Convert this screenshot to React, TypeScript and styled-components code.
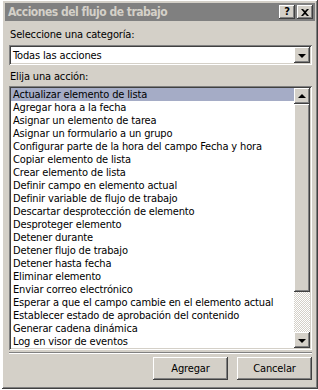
import React from "react";
import styled, { createGlobalStyle, css } from "styled-components";

const GlobalStyle = createGlobalStyle`
  body {
    margin: 0;
    background: #ffffff;
  }
`;

const actions = [
  "Actualizar elemento de lista",
  "Agregar hora a la fecha",
  "Asignar un elemento de tarea",
  "Asignar un formulario a un grupo",
  "Configurar parte de la hora del campo Fecha y hora",
  "Copiar elemento de lista",
  "Crear elemento de lista",
  "Definir campo en elemento actual",
  "Definir variable de flujo de trabajo",
  "Descartar desprotección de elemento",
  "Desproteger elemento",
  "Detener durante",
  "Detener flujo de trabajo",
  "Detener hasta fecha",
  "Eliminar elemento",
  "Enviar correo electrónico",
  "Esperar a que el campo cambie en el elemento actual",
  "Establecer estado de aprobación del contenido",
  "Generar cadena dinámica",
  "Log en visor de eventos",
];

const raised = css`
  background: #d4d0c8;
  box-shadow: inset -1px -1px #404040, inset 1px 1px #ffffff,
    inset -2px -2px #808080, inset 2px 2px #d4d0c8;
`;

const sunken = css`
  box-shadow: inset 1px 1px #808080, inset -1px -1px #ffffff,
    inset 2px 2px #404040, inset -2px -2px #d4d0c8;
`;

const App: React.FC = () => {
  return (
    <>
      <GlobalStyle />
      <Window>
        <TitleBar>
          <TitleText>Acciones del flujo de trabajo</TitleText>
          <CaptionButtons>
            <CaptionButton>?</CaptionButton>
            <CaptionButton $close>
              <svg width="8" height="7" viewBox="0 0 8 7">
                <path
                  d="M0 0h2l2 2 2-2h2L5 3.5 8 7H6L4 5 2 7H0l3-3.5z"
                  fill="#000"
                />
              </svg>
            </CaptionButton>
          </CaptionButtons>
        </TitleBar>
        <Body>
          <Label>Seleccione una categoría:</Label>
          <Combo>
            <ComboText>Todas las acciones</ComboText>
            <ArrowButton>
              <Arrow $down />
            </ArrowButton>
          </Combo>
          <Label $top={4}>Elija una acción:</Label>
          <ListBox>
            <Items>
              {actions.map((a, i) => (
                <Item key={a} $selected={i === 0}>
                  {a}
                </Item>
              ))}
            </Items>
            <ScrollBar>
              <ArrowButton>
                <Arrow />
              </ArrowButton>
              <Thumb />
              <Track />
              <ArrowButton>
                <Arrow $down />
              </ArrowButton>
            </ScrollBar>
          </ListBox>
          <Separator />
          <ButtonRow>
            <PushButton>Agregar</PushButton>
            <PushButton>Cancelar</PushButton>
          </ButtonRow>
        </Body>
      </Window>
    </>
  );
};

const Window = styled.div`
  ${raised};
  box-sizing: border-box;
  width: 316px;
  height: 389px;
  margin-left: 2px;
  padding: 3px;
  display: flex;
  flex-direction: column;
  font-family: "DejaVu Sans Condensed", "DejaVu Sans", sans-serif;
  font-size: 11px;
  letter-spacing: -0.15px;
  color: #000;
`;

const TitleBar = styled.div`
  height: 18px;
  background: #808080;
  display: flex;
  align-items: center;
  justify-content: space-between;
  padding: 0 2px 0 3px;
`;

const TitleText = styled.div`
  color: #d4d0c8;
  font-weight: bold;
  font-size: 12px;
  letter-spacing: -0.5px;
`;

const CaptionButtons = styled.div`
  display: flex;
  gap: 2px;
`;

const CaptionButton = styled.div<{ $close?: boolean }>`
  ${raised};
  width: 16px;
  height: 14px;
  display: flex;
  align-items: center;
  justify-content: center;
  font-weight: bold;
  font-size: 11px;
  line-height: 14px;
  padding-bottom: ${(p) => (p.$close ? 0 : 1)}px;
  box-sizing: border-box;
`;

const Body = styled.div`
  flex: 1;
  display: flex;
  flex-direction: column;
  padding: 6px 3px 0 4px;
`;

const Label = styled.div<{ $top?: number }>`
  margin-top: ${(p) => p.$top ?? 0}px;
  height: 15px;
  line-height: 15px;
  padding-left: 1px;
`;

const Combo = styled.div`
  ${sunken};
  background: #fff;
  height: 20px;
  margin-top: 3px;
  display: flex;
  align-items: center;
  padding: 2px;
  box-sizing: border-box;
`;

const ComboText = styled.div`
  flex: 1;
  padding-left: 2px;
`;

const ArrowButton = styled.div`
  ${raised};
  width: 16px;
  height: 16px;
  flex: none;
  display: flex;
  align-items: center;
  justify-content: center;
`;

const Arrow = styled.div<{ $down?: boolean }>`
  width: 0;
  height: 0;
  border-left: 4px solid transparent;
  border-right: 4px solid transparent;
  ${(p) =>
    p.$down
      ? css`
          border-top: 4px solid #000;
          margin-top: 1px;
        `
      : css`
          border-bottom: 4px solid #000;
          margin-bottom: 1px;
        `}
`;

const ListBox = styled.div`
  ${sunken};
  background: #fff;
  margin-top: 2px;
  height: 264px;
  padding: 2px;
  box-sizing: border-box;
  display: flex;
`;

const Items = styled.div`
  flex: 1;
  overflow: hidden;
`;

const Item = styled.div<{ $selected?: boolean }>`
  height: 13px;
  line-height: 13px;
  padding-left: 2px;
  white-space: nowrap;
  background: ${(p) => (p.$selected ? "#a5acc6" : "transparent")};
`;

const ScrollBar = styled.div`
  width: 16px;
  display: flex;
  flex-direction: column;
`;

const Thumb = styled.div`
  ${raised};
  height: 188px;
`;

const Track = styled.div`
  flex: 1;
  background-color: #ffffff;
  background-image: repeating-conic-gradient(#d4d0c8 0 25%, #ffffff 0 50%);
  background-size: 2px 2px;
`;

const Separator = styled.div`
  margin-top: 2px;
  height: 0;
  border-top: 1px solid #808080;
  border-bottom: 1px solid #ffffff;
`;

const ButtonRow = styled.div`
  display: flex;
  justify-content: flex-end;
  gap: 9px;
  margin-top: 3px;
`;

const PushButton = styled.div`
  ${raised};
  width: 75px;
  height: 23px;
  display: flex;
  align-items: center;
  justify-content: center;
  box-sizing: border-box;
`;

export default App;
